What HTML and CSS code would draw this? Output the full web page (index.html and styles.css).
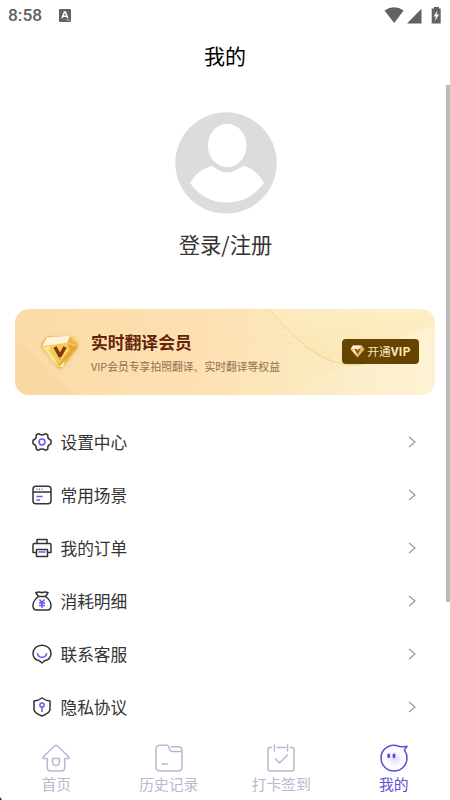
FILE: index.html
```html
<!DOCTYPE html>
<html lang="zh-CN">
<head>
<meta charset="utf-8">
<title>我的</title>
<link rel="stylesheet" href="styles.css">
</head>
<body>
<div class="app">
  <header class="status">
    <span class="time">8:58</span>
    <svg class="notice" width="12" height="13" viewBox="0 0 12 13"><rect width="12" height="13" rx="1" fill="#616161"/><path d="M3 9.2 5.4 3h1L8.8 9.2M4 7.2h3.8" fill="none" stroke="#fff" stroke-width="1.5"/><path d="M7 11h4" stroke="#ccc" stroke-width=".8"/></svg>
    <svg class="signals" width="58" height="18" viewBox="0 0 58 18" fill="#616161"><path d="M.5 4.5Q10 -2 19.7 4.5L10.200 17Z"/><path d="M37.500 2.800V17.500H23Z"/><path d="M50 2.500V1h5v1.500h1.700V17.500h-9V2.500Z"/><path d="m53.500 4.500-4 6h2.400l-.9 4.500 4-6.500h-2.400Z" fill="#fff"/></svg>
  </header>
  <h1 class="title">我的</h1>
  <main class="content">
    <section class="profile">
      <svg class="avatar" width="102" height="102" viewBox="0 0 102 102"><circle cx="51" cy="51" r="50.700" fill="#dcdcdc"/><path d="M15 71Q23 57 37 54Q51 64 69 54Q81 57 89 71C80 83 68 90.500 52 90.500S23 83 15 71Z" fill="#fff"/><ellipse cx="52.200" cy="35" rx="21" ry="25.500" fill="#dcdcdc"/><ellipse cx="52.200" cy="33.500" rx="19.300" ry="21.700" fill="#fff"/></svg>
      <div class="login">登录/注册</div>
    </section>
    <section class="vip">
      <svg class="waves" width="420" height="86" viewBox="0 0 420 86" preserveAspectRatio="none">
        <defs>
          <linearGradient id="w1" x1="0" y1="0" x2="0" y2="1"><stop stop-color="#fff3c6"/><stop offset="1" stop-color="#f8df9b" stop-opacity=".5"/></linearGradient>
          <linearGradient id="w2" x1="0" x2="1"><stop stop-color="#fff6df" stop-opacity="0"/><stop offset="1" stop-color="#fff6dc" stop-opacity=".6"/></linearGradient>
        </defs>
        <path d="M0 29Q34 60 61 86H0Z" fill="#f7d192" opacity=".28"/>
        <path d="M254 0C282 30 308 63 353 54S394 24 420 16V0Z" fill="url(#w1)" opacity=".4"/>
        <path d="M258 86C330 65 367 30 420 16V86Z" fill="url(#w2)"/>
        <path d="M254 0C282 30 308 65 353 54C330 64 296 50 254 0Z" fill="#eed17d" opacity=".55"/>
        <path d="M254 0C282 30 308 63 353 54" fill="none" stroke="#e7cc80" stroke-width=".7" opacity=".7"/>
        <g fill="none" stroke="#edcd8c" stroke-width=".5" opacity=".28">
          <path d="M90 10C160-8 195 40 251 24S305 45 337 83"/><path d="M90 17C160-1 192 47 248 31S300 48 328 84"/><path d="M90 24C160 6 190 54 246 38S292 53 317 85"/><path d="M90 31C160 13 188 61 243 45S284 60 306 86"/><path d="M90 38C160 20 185 68 240 52S276 65 296 86"/><path d="M90 45C160 27 182 75 237 59S267 70 286 86"/><path d="M90 52C160 34 179 82 234 66S260 76 276 86"/>
        </g>
      </svg>
      <svg class="gem" width="42" height="38" viewBox="0 0 42 38">
        <defs><linearGradient id="g" x1="0" y1="0" x2="1" y2="1"><stop stop-color="#e9a83d"/><stop offset=".5" stop-color="#f8d466"/><stop offset="1" stop-color="#d99928"/></linearGradient></defs>
        <path d="M9 3 32 3Q34 3 36 5L39 10Q40 13 38 16L24 34Q21 37 18 34L4 17Q1 13 3 10L7 4Z" fill="url(#g)"/>
        <path d="M8 4 31 3 28 10 14 12 3 13Z" fill="#fff1dc"/><path d="M31 4 39 12 28 10Z" fill="#e8b552"/>
        <path d="M3 14 11 13 19 34Z" fill="#fae49c"/><path d="M29 11 39 14 20 34Z" fill="#e6a631"/><path d="M13 12 28 10 31 17 20 30 10 18Z" fill="#f7ca54"/>
        <path d="m16 14 5 9 5-9" fill="none" stroke="#823a10" stroke-width="3.600"/><path d="m20 25 3 0 5-8" fill="none" stroke="#ffe78f" stroke-width="1"/><path d="m20 34 6-6-2 6Z" fill="#fff3bd"/>
      </svg>
      <div class="vip-copy"><h2>实时翻译会员</h2><p>VIP会员专享拍照翻译、实时翻译等权益</p></div>
      <button class="open-vip"><svg width="15" height="13" viewBox="0 0 15 13"><path d="M3 .5h9L14.500 4.500 7.500 12.500.5 4.500Z" fill="#e6b461"/><path d="M3 .5h8L9.500 4h-9Z" fill="#fff0d2"/><path d="m2 5 3 0 2 6Z" fill="#fff0b5"/><path d="m5.300 4 2.200 3.500L9.700 4" fill="none" stroke="#855020" stroke-width="1.500"/></svg><span>开通<b>VIP</b></span></button>
    </section>
    <nav class="menu">
      <a class="row"><svg class="icon" viewBox="0 0 20 20"><path d="M6.300 1.700Q10 4.300 13.700 1.700L15.800 3Q15.200 6.700 19 8.200V11.800Q15.200 13.300 15.800 17L13.700 18.300Q10 15.700 6.300 18.300L4.200 17Q4.800 13.300 1 11.800V8.200Q4.800 6.700 4.200 3Z"/><circle class="accent" cx="10" cy="10" r="2.900"/></svg><span>设置中心</span><svg class="arrow" viewBox="0 0 8 12"><path d="m1 1 6 5-6 5"/></svg></a>
      <a class="row"><svg class="icon" viewBox="0 0 20 20"><rect x="1" y="1.200" width="18" height="17.600" rx="3"/><path d="M1 7h18"/><path class="accent" d="M4.500 4.200h1m1.500 0h1m1.500 0h1M4.500 11.500h6M4.500 15h3.500"/></svg><span>常用场景</span><svg class="arrow" viewBox="0 0 8 12"><path d="m1 1 6 5-6 5"/></svg></a>
      <a class="row"><svg class="icon" viewBox="0 0 20 20"><path d="M5 5V1.500h10V5M4 14.500H1V7Q1 5.500 2.500 5.500h15Q19 5.500 19 7v7.500h-3M4.500 11.500h11v7h-11Z"/><path class="accent" d="M6.500 14h7"/></svg><span>我的订单</span><svg class="arrow" viewBox="0 0 8 12"><path d="m1 1 6 5-6 5"/></svg></a>
      <a class="row"><svg class="icon" viewBox="0 0 20 20"><path d="M6.500 5.500 3.800 1.800Q7 .4 10 1.800Q13 .4 16 1.800L13.500 5.500ZM6.500 5.500C3 8 1 11 1 14.500Q1 19 4.500 19h11Q19 19 19 14.500C19 11 17 8 13.500 5.500"/><path class="accent" d="m7.500 8.500 2.500 3 2.500-3M10 11.500V17M7 12h6M7 14.500h6"/></svg><span>消耗明细</span><svg class="arrow" viewBox="0 0 8 12"><path d="m1 1 6 5-6 5"/></svg></a>
      <a class="row"><svg class="icon" viewBox="0 0 20 20"><path d="M10 19 7.500 16.800C3.500 16 1 13 1 9.500C1 4.700 5 1.200 10 1.200S19 4.700 19 9.500C19 13 16.500 16 12.500 16.800Z"/><path class="accent" d="M5.200 9.200C7 14.700 13 14.700 14.800 9.200"/></svg><span>联系客服</span><svg class="arrow" viewBox="0 0 8 12"><path d="m1 1 6 5-6 5"/></svg></a>
      <a class="row"><svg class="icon" viewBox="0 0 20 20"><path d="M10 1Q13.500 3.500 18 4v9Q17 16.500 10 19Q3 16.500 2 13V4Q6.500 3.500 10 1Z"/><circle class="accent" cx="10" cy="8" r="2.100"/><path class="accent" d="M10 10.500V15"/></svg><span>隐私协议</span><svg class="arrow" viewBox="0 0 8 12"><path d="m1 1 6 5-6 5"/></svg></a>
    </nav>
    <div class="scrollbar"></div>
  </main>
  <nav class="tabs">
    <a class="tab"><svg viewBox="0 0 28 28"><path d="M5.200 14.500H2Q.3 14 1.500 12.500L12.500 2Q14 .7 15.500 2L26.500 12.500Q27.700 14 26 14.500h-3.200v9Q22.800 27 19.500 27h-11Q5.200 27 5.200 23.500ZM10.500 14.500h7v4Q17 21.500 14 21.500T10.500 18.500Z"/></svg><span>首页</span></a>
    <a class="tab"><svg viewBox="0 0 28 28"><path d="M12.500 1.200H5Q1 1.200 1 5v18Q1 27 5 27h18Q27 27 27 23V7.500H17Q15.300 7.500 14.500 5.500L13.500 2.500Q13 1.200 12.500 1.200M16 2.700h8Q27 3.200 27 6v2M7 20h5.500"/></svg><span>历史记录</span></a>
    <a class="tab"><svg viewBox="0 0 28 28"><path d="M4.500 3.500H3Q1 3.500 1 5.500V25Q1 27 3 27H25Q27 27 27 25V5.500Q27 3.500 25 3.500h-1.500M10.500 3.500h8M7.500 1v6M20.500 1v6M8.500 15l4 4 8-8"/></svg><span>打卡签到</span></a>
    <a class="tab active"><svg viewBox="0 0 28 28"><defs><radialGradient id="face"><stop stop-color="#deddff"/><stop offset="1" stop-color="#fff"/></radialGradient></defs><circle cx="15" cy="15" r="9" fill="url(#face)" stroke="none"/><path d="M19.500 2.500C10 -1.500 1 5 1 14c0 7.200 5.800 13 13 13s13-5.800 13-13c0-3-1-5.800-2.600-7.800L27 2.300q-3.500 1-7.500.2"/><path d="M8.700 10.800v2M14 10.800v2" stroke-width="2.800"/></svg><span>我的</span></a>
  </nav>
  <div class="corner"></div>
</div>
</body>
</html>
```
FILE: styles.css
```css
* { box-sizing: border-box; }
body {
  margin: 0;
  background: #fff;
  color: #333;
  font-family: "Noto Sans CJK SC", sans-serif;
}
.app {
  position: relative;
  width: 450px;
  height: 800px;
  display: flex;
  flex-direction: column;
  overflow: hidden;
}
.status {
  height: 30px;
  padding: 0 8px;
  display: flex;
  align-items: center;
  flex: none;
}
.time {
  width: 51px;
  color: #616161;
  font: 500 17.3px/30px Roboto, sans-serif;
}
.signals { margin-left: auto; }
.title {
  height: 55px;
  margin: 0;
  flex: none;
  color: #000;
  text-align: center;
  font-size: 21px;
  font-weight: 400;
  line-height: 51px;
}
.content {
  position: relative;
  height: 645px;
  flex: none;
  overflow: hidden;
}
.profile {
  height: 223.500px;
  padding: 27px 0 0 1px;
  display: flex;
  flex-direction: column;
  align-items: center;
}
.avatar { flex: none; }
.login {
  margin-top: 14px;
  font-size: 21.3px;
  line-height: 32px;
}
.vip {
  position: relative;
  width: 420px;
  height: 86px;
  margin-left: 15px;
  padding: 0 16px 0 24px;
  display: flex;
  align-items: center;
  border-radius: 14px;
  overflow: hidden;
  background: linear-gradient(100deg, #fbdba7, #fde1b2 45%, #fbe9be 68%, #fcedc8);
}
.waves { position: absolute; inset: 0; }
.gem {
  position: relative;
  flex: none;
  margin-right: 10px;
  filter: drop-shadow(0 1px 2px #dba56155);
}
.vip-copy { position: relative; }
.vip-copy h2 {
  margin: 0;
  color: #65230c;
  font-size: 16.8px;
  line-height: 25px;
}
.vip-copy p {
  margin: 3px 0 0;
  color: #936e50;
  font-size: 10.8px;
  line-height: 16px;
  white-space: nowrap;
}
.open-vip {
  position: relative;
  width: 77px;
  height: 25px;
  margin-left: auto;
  padding: 0;
  display: flex;
  align-items: center;
  justify-content: center;
  gap: 2px;
  border: 0;
  border-radius: 4px;
  background: #654300;
  color: #fbe6bc;
  font: 11.700px/25px "Noto Sans CJK SC", sans-serif;
  white-space: nowrap;
}
.open-vip b { font: 700 12px/25px Roboto, sans-serif; letter-spacing: .3px; }
.menu { padding: 21.500px 34px 0 32px; }
.row {
  height: 52.900px;
  display: flex;
  align-items: center;
  font-size: 16.700px;
}
.icon {
  width: 20px;
  height: 20px;
  margin-right: 8.500px;
  fill: none;
  stroke: #333;
  stroke-width: 1.5;
  stroke-linejoin: round;
}
.accent { stroke: #625bee; stroke-width: 1.5; }
.arrow {
  width: 8px;
  height: 12px;
  margin-left: auto;
  fill: none;
  stroke: #999;
  stroke-width: 1.2;
}
.scrollbar {
  position: absolute;
  top: 0;
  right: 0;
  width: 4.500px;
  height: 517px;
  background: #bababa;
}
.tabs {
  height: 70px;
  display: grid;
  grid-template-columns: repeat(4, 1fr);
  flex: none;
  background: #fff;
}
.tab {
  padding-top: 14px;
  display: flex;
  flex-direction: column;
  align-items: center;
  color: #b9b8d0;
  font-size: 14.800px;
  line-height: 22px;
}
.tab svg {
  width: 28px;
  height: 28px;
  fill: none;
  stroke: currentColor;
  stroke-width: 1.5;
  stroke-linecap: round;
  stroke-linejoin: round;
}
.tab span { margin-top: 1px; }
.tab.active { color: #5b50d6; }
.corner {
  position: absolute;
  left: 0;
  bottom: 0;
  width: 2px;
  height: 3px;
  background: #333;
  clip-path: polygon(0 0, 100% 100%, 0 100%);
}
```
